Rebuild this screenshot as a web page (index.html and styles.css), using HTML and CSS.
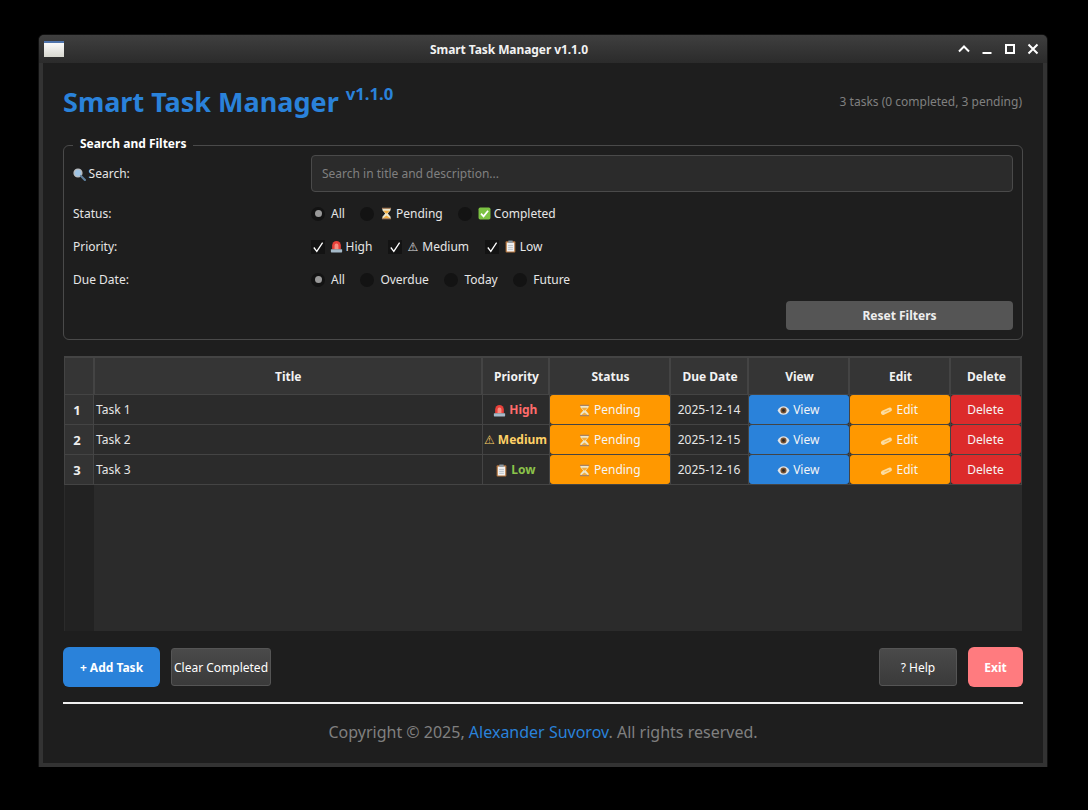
FILE: index.html
```html
<!DOCTYPE html>
<html lang="en">
<head>
  <meta charset="UTF-8">
  <title>Smart Task Manager v1.1.0</title>
  <link rel="stylesheet" href="styles.css">
</head>
<body>

<svg class="defs" width="0" height="0">
  <symbol id="i-search" viewBox="0 0 12 12">
    <circle cx="4.6" cy="4.6" r="3.6" fill="#9fc4e4" stroke="#b8bcc0" stroke-width="1.3"/>
    <path d="M7.4 7.4l3.6 3.6" stroke="#5f7f9c" stroke-width="2" stroke-linecap="round"/>
  </symbol>
  <symbol id="i-hourglass" viewBox="0 0 12 12">
    <path d="M2.200 1.500h7.600V3L7.200 6l2.600 3v1.500H2.200V9l2.600-3-2.600-3z" fill="#ece6cc"/>
    <path d="M3.200 3.400h5.600L6.500 5.900h-1zM3 10.200L6 7.800l3 2.400z" fill="#f2ac3e"/>
    <path d="M1.800 .6h8.400v1.200H1.800zM1.800 10.200h8.400v1.200H1.800z" fill="#a98260"/>
  </symbol>
  <symbol id="i-done" viewBox="0 0 12 12">
    <rect x=".5" y=".5" width="11" height="11" rx="1.500" fill="#7cc243"/>
    <path d="M2.800 6.200l2.300 2.400 4.200-5.200" fill="none" stroke="#fff" stroke-width="1.600"/>
  </symbol>
  <symbol id="i-siren" viewBox="0 0 12 12">
    <path d="M2 8.500V5a4 4 0 0 1 8 0v3.500z" fill="#e8403a"/>
    <path d="M4.200 8.500V5a1.800 1.800 0 0 1 3.600 0v3.500z" fill="#f78d80"/>
    <rect x=".8" y="8.500" width="10.400" height="3" rx=".6" fill="#a5bac9"/>
  </symbol>
  <symbol id="i-clip" viewBox="0 0 12 12">
    <rect x="1.500" y="1.200" width="9" height="10.300" rx=".8" fill="#b5763f"/>
    <rect x="2.600" y="2.400" width="6.800" height="8.200" fill="#f1f1f1"/>
    <rect x="4" y=".5" width="4" height="2.200" fill="#8d99a3"/>
    <path d="M3.800 5h4.400M3.800 6.800h4.400M3.800 8.600h4.400" stroke="#a9b4bd" stroke-width=".7"/>
  </symbol>
  <symbol id="i-eye" viewBox="0 0 12 12">
    <path d="M.5 6C2 3 3.900 2 6 2s4 1 5.500 4C10 9 8.100 10 6 10S2 9 .5 6z" fill="#dfe3e6"/>
    <circle cx="6" cy="6" r="2.800" fill="#7a5230"/>
    <circle cx="6" cy="6" r="1.300" fill="#2a2a2a"/>
  </symbol>
  <symbol id="i-pencil" viewBox="0 0 12 12">
    <path d="M2.800 8L9 5.200" stroke="#fcdca0" stroke-width="4" stroke-linecap="round"/>
    <path d="M4 7.500L8.500 5.500" stroke="#ffb63f" stroke-width="1"/>
  </symbol>
  <symbol id="i-check" viewBox="0 0 14 14">
    <path d="M2.800 7.500l3 3.800 5.800-8.600" fill="none" stroke="#fff" stroke-width="1.300"/>
  </symbol>
</svg>

<div class="window">
  <div class="titlebar">
    <div class="app-icon"></div>
    <div class="window-title">Smart Task Manager v1.1.0</div>
    <div class="window-controls">
      <svg width="12" height="12" viewBox="0 0 12 12"><path d="M1 8.500l5-5 5 5" fill="none" stroke="#fff" stroke-width="2"/></svg>
      <svg width="12" height="12" viewBox="0 0 12 12"><path d="M1.500 10h9" stroke="#fff" stroke-width="2"/></svg>
      <svg width="12" height="12" viewBox="0 0 12 12"><path d="M2 2h8v8H2z" fill="none" stroke="#fff" stroke-width="2"/></svg>
      <svg width="12" height="12" viewBox="0 0 12 12"><path d="M1.500 1.500l9 9M10.500 1.500l-9 9" stroke="#fff" stroke-width="2"/></svg>
    </div>
  </div>

  <div class="content">
    <div class="header">
      <h1>Smart Task Manager <sup>v1.1.0</sup></h1>
      <div class="counts">3 tasks (0 completed, 3 pending)</div>
    </div>

    <fieldset class="filters">
      <legend>Search and Filters</legend>
      <div class="filter-row search-row">
        <label class="filter-label"><svg class="ico"><use href="#i-search"/></svg> Search:</label>
        <input class="search" type="text" placeholder="Search in title and description...">
      </div>
      <div class="filter-row">
        <span class="filter-label">Status:</span>
        <div class="options">
          <span class="opt"><i class="radio on"></i>All</span>
          <span class="opt"><i class="radio"></i><svg class="ico"><use href="#i-hourglass"/></svg> Pending</span>
          <span class="opt"><i class="radio"></i><svg class="ico"><use href="#i-done"/></svg> Completed</span>
        </div>
      </div>
      <div class="filter-row">
        <span class="filter-label">Priority:</span>
        <div class="options checks">
          <span class="opt"><i class="check"><svg><use href="#i-check"/></svg></i><svg class="ico"><use href="#i-siren"/></svg> High</span>
          <span class="opt"><i class="check"><svg><use href="#i-check"/></svg></i><span class="warn">⚠</span> Medium</span>
          <span class="opt"><i class="check"><svg><use href="#i-check"/></svg></i><svg class="ico"><use href="#i-clip"/></svg> Low</span>
        </div>
      </div>
      <div class="filter-row">
        <span class="filter-label">Due Date:</span>
        <div class="options">
          <span class="opt"><i class="radio on"></i>All</span>
          <span class="opt"><i class="radio"></i>Overdue</span>
          <span class="opt"><i class="radio"></i>Today</span>
          <span class="opt"><i class="radio"></i>Future</span>
        </div>
      </div>
      <div class="reset-row">
        <button class="reset">Reset Filters</button>
      </div>
    </fieldset>

    <table class="tasks">
      <colgroup>
        <col class="c-num"><col class="c-title"><col class="c-priority"><col class="c-status">
        <col class="c-due"><col class="c-view"><col class="c-edit"><col class="c-delete">
      </colgroup>
      <thead>
        <tr>
          <th></th><th class="title-head">Title</th><th>Priority</th><th>Status</th>
          <th>Due Date</th><th>View</th><th>Edit</th><th>Delete</th>
        </tr>
      </thead>
      <tbody>
        <tr>
          <th>1</th>
          <td>Task 1</td>
          <td class="prio high"><svg class="ico"><use href="#i-siren"/></svg> High</td>
          <td class="action"><span class="cell-btn orange"><svg class="ico"><use href="#i-hourglass"/></svg> Pending</span></td>
          <td class="center">2025-12-14</td>
          <td class="action"><span class="cell-btn blue"><svg class="ico"><use href="#i-eye"/></svg> View</span></td>
          <td class="action"><span class="cell-btn orange"><svg class="ico"><use href="#i-pencil"/></svg> Edit</span></td>
          <td class="action"><span class="cell-btn red">Delete</span></td>
        </tr>
        <tr>
          <th>2</th>
          <td>Task 2</td>
          <td class="prio medium"><span class="warn">⚠</span> Medium</td>
          <td class="action"><span class="cell-btn orange"><svg class="ico"><use href="#i-hourglass"/></svg> Pending</span></td>
          <td class="center">2025-12-15</td>
          <td class="action"><span class="cell-btn blue"><svg class="ico"><use href="#i-eye"/></svg> View</span></td>
          <td class="action"><span class="cell-btn orange"><svg class="ico"><use href="#i-pencil"/></svg> Edit</span></td>
          <td class="action"><span class="cell-btn red">Delete</span></td>
        </tr>
        <tr>
          <th>3</th>
          <td>Task 3</td>
          <td class="prio low"><svg class="ico"><use href="#i-clip"/></svg> Low</td>
          <td class="action"><span class="cell-btn orange"><svg class="ico"><use href="#i-hourglass"/></svg> Pending</span></td>
          <td class="center">2025-12-16</td>
          <td class="action"><span class="cell-btn blue"><svg class="ico"><use href="#i-eye"/></svg> View</span></td>
          <td class="action"><span class="cell-btn orange"><svg class="ico"><use href="#i-pencil"/></svg> Edit</span></td>
          <td class="action"><span class="cell-btn red">Delete</span></td>
        </tr>
        <tr class="filler"><th></th><td colspan="7"></td></tr>
      </tbody>
    </table>

    <div class="actions">
      <button class="btn primary">+ Add Task</button>
      <button class="btn plain clear">Clear Completed</button>
      <div class="spacer"></div>
      <button class="btn plain help">? Help</button>
      <button class="btn exit">Exit</button>
    </div>

    <div class="footer">
      Copyright © 2025, <a href="#">Alexander Suvorov</a>. All rights reserved.
    </div>
  </div>
</div>

</body>
</html>
```

FILE: styles.css
```css
body {
  margin: 0;
  background: #000;
  font-family: 'Noto Sans', sans-serif;
  font-size: 12px;
  color: #e6e6e6;
  padding: 35px 41px 0 39px;
}

.defs {
  display: block;
  height: 0;
}

.window {
  width: 1008px;
  height: 732px;
  box-sizing: border-box;
  background: #333;
  border-radius: 5px 5px 0 0;
  padding: 0 4px 4px 4px;
  box-shadow: 0 0 0 1px #111;
}

.titlebar {
  height: 28px;
  margin: 0 -4px;
  display: flex;
  align-items: center;
  border-radius: 5px 5px 0 0;
  background: linear-gradient(#3f3f3f, #2b2b2b);
}

.app-icon {
  width: 20px;
  height: 16px;
  margin-left: 5px;
  box-sizing: border-box;
  border-top: 2px solid #4f74ac;
  background: linear-gradient(#fafafa, #d8d8d0);
}

.window-title {
  flex: 1;
  text-align: center;
  font-weight: bold;
  color: #f2f2f2;
  letter-spacing: -0.08px;
  padding-right: 4px;
}

.window-controls {
  display: flex;
  gap: 11px;
  margin-right: 8px;
}

.content {
  height: 700px;
  box-sizing: border-box;
  background: #1e1e1e;
  padding: 0 20px;
}

.header {
  height: 74px;
  display: flex;
  justify-content: space-between;
  align-items: center;
}

h1 {
  margin: 0;
  font-size: 27px;
  font-weight: bold;
  color: #2a82da;
  position: relative;
  top: 1px;
}

h1 sup {
  font-size: 16.700px;
  line-height: 0;
  vertical-align: 12px;
}

.counts {
  color: #808080;
  position: relative;
  top: 1px;
  right: 1px;
}

.filters {
  margin: 0;
  height: 203px;
  box-sizing: border-box;
  border: 1px solid #4a4a4a;
  border-radius: 6px;
  padding: 0 9px;
}

legend {
  margin-left: 0;
  padding: 0 7px;
  font-weight: bold;
  color: #fff;
  line-height: 16px;
  position: relative;
  top: -1px;
}

.filter-row {
  display: flex;
  align-items: center;
  height: 33px;
}

.search-row {
  height: 37px;
  margin-top: 2px;
  margin-bottom: 5px;
}

.filter-label {
  width: 238px;
  flex: none;
}

.search {
  flex: 1;
  height: 37px;
  box-sizing: border-box;
  padding: 0 10px;
  background: #2b2b2b;
  border: 1px solid #4a4a4a;
  border-radius: 4px;
  color: #fff;
  font: 12px 'Noto Sans', sans-serif;
}

.search::placeholder {
  color: #808080;
}

.options {
  display: flex;
  gap: 15.500px;
}

.options.checks {
  gap: 16px;
}

.opt {
  display: flex;
  align-items: center;
  white-space: pre;
}

.radio {
  width: 14px;
  height: 14px;
  border-radius: 50%;
  background: #131313;
  margin-right: 6px;
  display: flex;
  align-items: center;
  justify-content: center;
}

.radio.on::after {
  content: "";
  width: 7px;
  height: 7px;
  border-radius: 50%;
  background: #999;
}

.check {
  width: 14px;
  height: 14px;
  background: #131313;
  margin-right: 5px;
}

.check svg {
  display: block;
  width: 14px;
  height: 14px;
}

.ico {
  width: 13px;
  height: 13px;
  vertical-align: -3px;
  margin-left: -.5px;
}

.warn {
  font-family: 'DejaVu Sans', sans-serif;
  font-size: 12px;
  font-weight: normal;
  margin-right: 1px;
}

.prio .warn {
  margin-right: 0;
}

.reset-row {
  display: flex;
  justify-content: flex-end;
  margin-top: 5px;
}

button {
  font-family: 'Noto Sans', sans-serif;
  font-size: 12px;
  color: #fff;
  cursor: pointer;
}

.reset {
  width: 227px;
  height: 29px;
  background: #555;
  border: none;
  border-radius: 4px;
  font-weight: bold;
  color: #eee;
}

.tasks {
  width: 958px;
  height: 275px;
  margin: 16px 1px;
  table-layout: fixed;
  border-collapse: collapse;
  background: #2b2b2b;
}

.c-num { width: 29px; }
.c-priority { width: 67px; }
.c-status { width: 121px; }
.c-due { width: 78px; }
.c-view { width: 101px; }
.c-edit { width: 101px; }
.c-delete { width: 71px; }

.tasks th, .tasks td {
  border: 1px solid #444;
  padding: 0;
}

.tasks thead th {
  height: 36px;
  padding-left: 2px;
  background: #353535;
  color: #f2f2f2;
  font-weight: bold;
  border-width: 2px 2px 1px 1px;
}

.tasks thead th.title-head {
  padding-left: 1px;
}

.tasks tbody tr {
  height: 30px;
}

.tasks tbody th {
  padding-right: 4px;
  background: #333;
  color: #eee;
  font-weight: bold;
  font-size: 13px;
}

.tasks td {
  padding-left: 2px;
  color: #e6e6e6;
}

.tasks td.center {
  padding: 0;
  text-align: center;
}

.tasks td.prio {
  padding: 0;
  text-align: center;
  font-weight: bold;
  white-space: nowrap;
}

.prio.high { color: #ff6b6b; }
.prio.medium { color: #ffd166; }
.prio.low { color: #8bc34a; }

.tasks td.action {
  padding: 0;
}

.cell-btn {
  display: block;
  height: 29px;
  line-height: 29px;
  text-align: center;
  border-radius: 3px;
  color: #f5f5f5;
}

.orange { background: #ff9800; }
.blue { background: #2a82da; }
.red { background: #dc2b2b; }

.tasks .filler {
  height: auto;
}

.tasks .filler th {
  background: #222;
  border: none;
}

.tasks .filler td {
  background: #2b2b2b;
  border: none;
}

.actions {
  display: flex;
  align-items: center;
  height: 40px;
}

.spacer {
  flex: 1;
}

.btn {
  border: none;
  border-radius: 6px;
  height: 40px;
  font-weight: bold;
}

.primary {
  width: 97px;
  background: #2a82da;
}

.plain {
  height: 38px;
  background: linear-gradient(#4a4a4a, #3a3a3a);
  border: 1px solid #555;
  border-radius: 3px;
  font-weight: normal;
  padding: 0;
}

.clear {
  width: 100px;
  margin-left: 11px;
}

.help {
  width: 78px;
}

.exit {
  width: 55px;
  margin-left: 11px;
  background: #ff7b7f;
}

.footer {
  margin-top: 15px;
  border-top: 2px solid #f0f0f0;
  padding-top: 17px;
  text-align: center;
  font-size: 16px;
  color: #808080;
}

.footer a {
  color: #2a82da;
  text-decoration: none;
}
```
